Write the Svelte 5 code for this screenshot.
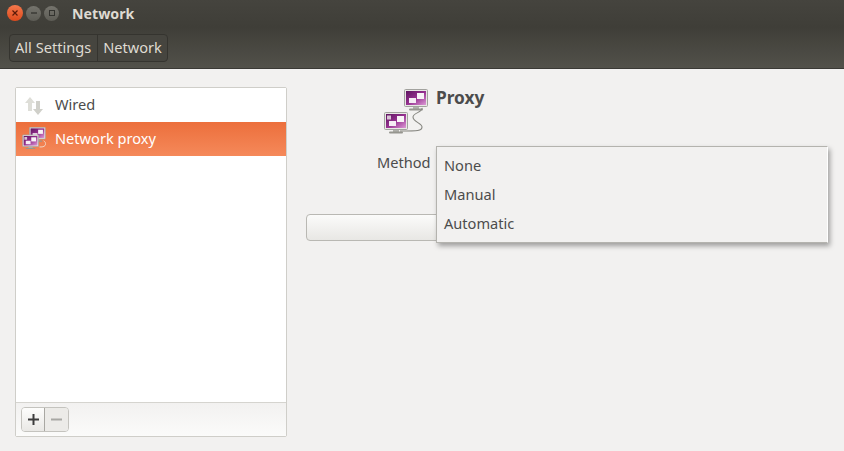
<script>
  const rows = [
    { name: "Wired", icon: "wired" },
    { name: "Network proxy", icon: "proxy", active: true }
  ]
  const options = ["None", "Manual", "Automatic"]
</script>

{#snippet monitor(x, y, id, extra)}
  <g transform="translate({x} {y})">
    <rect x="9" y="17" width="6" height="3" fill="#b0b0ab" />
    <rect x="5" y="19.5" width="14" height="2" rx="1" fill="#96968f" />
    <rect x="0.5" y="0.5" width="23" height="17" rx="1" fill="#e8e8e4" stroke="#a2a29e" />
    <rect x="2" y="2" width="20" height="14" fill="url(#{id})" />
    <rect x="13" y="4" width="7" height="6" fill="#f8f3f7" />
    <rect x="5" y="9" width="7" height="5" fill="#f5ecf4" />
    {#if extra}
      <rect x="3" y="3.5" width="4" height="4" fill="#d8c4d5" />
    {/if}
  </g>
{/snippet}

{#snippet gradient(id)}
  <defs>
    <linearGradient id={id} x1="0" y1="0" x2="1" y2="1">
      <stop offset="0" stop-color="#5e1560" />
      <stop offset="0.5" stop-color="#95308f" />
      <stop offset="1" stop-color="#dd9ad6" />
    </linearGradient>
  </defs>
{/snippet}

<div class="window">
  <header class="titlebar">
    <div class="controls">
      <span class="ctl close">
        <svg viewBox="0 0 8 8" width="8" height="8"><path d="M1.5 1.5 6.5 6.5M6.5 1.5 1.5 6.5" stroke="#5b1a08" stroke-width="1.2" /></svg>
      </span>
      <span class="ctl">
        <svg viewBox="0 0 8 8" width="8" height="8"><path d="M1 4H7" stroke="#33332f" stroke-width="1.3" /></svg>
      </span>
      <span class="ctl">
        <svg viewBox="0 0 8 8" width="8" height="8"><rect x="1.5" y="1.5" width="5" height="5" fill="none" stroke="#33332f" /></svg>
      </span>
    </div>
    <span class="title">Network</span>
  </header>

  <div class="toolbar">
    <div class="crumbs">
      <button>All Settings</button>
      <button>Network</button>
    </div>
  </div>

  <main class="content">
    <aside class="sidebar">
      <ul class="list">
        {#each rows as row}
          <li class:active={row.active}>
            <span class="row-icon">
              {#if row.icon === "wired"}
                <svg class="wired-svg" viewBox="2 1 18 18" width="18" height="18">
                  <path d="M7 1 12 7H9V15H5V7H2Z" fill="#deded8" />
                  <path d="M15 19 20 13H17V5H13V13H10Z" fill="#d0d0ca" />
                </svg>
              {:else}
                <svg class="row-proxy" viewBox="0 0 34 32" width="24" height="22">
                  {@render gradient("row-grad")}
                  {@render monitor(10, 0, "row-grad", false)}
                  {@render monitor(0, 11, "row-grad", true)}
                  <path d="M31 20 C36 23 35 30 25 29" fill="none" stroke="#f0d8c8" stroke-width="1.4" />
                </svg>
              {/if}
            </span>
            <span class="row-name">{row.name}</span>
          </li>
        {/each}
      </ul>
      <div class="list-tools">
        <div class="tool-group">
          <button class="tool add">
            <svg viewBox="0 0 11 11" width="11" height="11"><path d="M5.5 0V11M0 5.5H11" stroke="#3c3c3c" stroke-width="2" /></svg>
          </button>
          <button class="tool remove">
            <svg viewBox="0 0 11 3" width="11" height="3"><path d="M0 1.5H11" stroke="#a8a8a4" stroke-width="2" /></svg>
          </button>
        </div>
      </div>
    </aside>

    <section class="panel">
      <div class="panel-head">
        <svg class="proxy-svg" viewBox="0 0 44 45" width="44" height="45">
          {@render gradient("head-grad")}
          {@render monitor(20, 0, "head-grad", false)}
          {@render monitor(0, 23, "head-grad", true)}
          <path d="M38 19 C39 23 29 24 29 28 C29 33 38 34 38 38 C38 42 34 42 16 42" fill="none" stroke="#85857f" stroke-width="1.1" />
        </svg>
        <h1>Proxy</h1>
      </div>
      <div class="method">
        <span class="method-label">Method</span>
        <div class="menu">
          {#each options as option}
            <div class="menu-item">{option}</div>
          {/each}
        </div>
      </div>
      <div class="apply"></div>
    </section>
  </main>
</div>

<style>
  :global(body) {
    margin: 0;
    background: #f2f1f0;
  }
  .window {
    width: 844px;
    height: 451px;
    overflow: hidden;
    display: flex;
    flex-direction: column;
    background: #f2f1f0;
    font-family: "Noto Sans", "Open Sans", sans-serif;
    font-size: 14.6px;
    color: #4c4c4c;
  }
  .titlebar {
    height: 27px;
    flex: none;
    display: flex;
    align-items: center;
    padding: 0 0 1px 7px;
    background: linear-gradient(#45443e, #3f3e38);
    box-sizing: border-box;
  }
  .controls {
    display: flex;
    align-items: center;
    gap: 3px;
    width: 65px;
  }
  .ctl {
    width: 15px;
    height: 15px;
    border-radius: 50%;
    background: linear-gradient(#75746d, #5d5c55);
    display: flex;
    align-items: center;
    justify-content: center;
  }
  .close {
    width: 16px;
    height: 16px;
    background: linear-gradient(#f4784c, #dd4a1c);
  }
  .title {
    font-weight: 700;
    font-size: 14.2px;
    color: #dfdbd2;
  }
  .toolbar {
    height: 42px;
    flex: none;
    display: flex;
    align-items: center;
    padding: 0 0 0 9px;
    box-sizing: border-box;
    background: linear-gradient(#3f3e38, #52514a);
    border-bottom: 1px solid #3a3935;
  }
  .crumbs {
    display: flex;
    height: 26px;
    border: 1px solid #35342f;
    border-radius: 4px;
    background: #46453f;
  }
  .crumbs button {
    border: 0;
    background: none;
    padding: 0 5px 2px 5px;
    font: inherit;
    color: #dfdbd2;
  }
  .crumbs button:first-child {
    padding-right: 6px;
  }
  .crumbs button + button {
    border-left: 1px solid #35342f;
  }
  .content {
    flex: 1;
    display: flex;
    padding: 18px 15px 14px;
    gap: 19px;
  }
  .sidebar {
    width: 272px;
    flex: none;
    display: flex;
    flex-direction: column;
    box-sizing: border-box;
    border: 1px solid #cfcec9;
    border-radius: 2px;
  }
  .list {
    flex: 1;
    list-style: none;
    margin: 0;
    padding: 0;
    background: #fff;
    border-bottom: 1px solid #d5d4cf;
  }
  .list li {
    height: 34px;
    display: flex;
    align-items: center;
    color: #4c4c4c;
  }
  .list li.active {
    background: linear-gradient(#ec6f3c, #f5895a);
    color: #fff;
  }
  .row-icon {
    width: 39px;
    padding-left: 6px;
    box-sizing: border-box;
    display: flex;
    align-items: center;
  }
  .row-name {
    margin-top: -2px;
  }
  .wired-svg {
    margin: 2px 0 0 3px;
  }
  .row-proxy {
    margin-top: -2px;
  }
  .list-tools {
    height: 33px;
    display: flex;
    align-items: center;
    padding-left: 5px;
    background: linear-gradient(#f2f1f0, #fbfbfa);
  }
  .tool-group {
    display: flex;
    height: 23px;
    border: 1px solid #c4c3be;
    border-radius: 4px;
    overflow: hidden;
  }
  .tool {
    width: 23px;
    padding: 0;
    border: 0;
    display: flex;
    align-items: center;
    justify-content: center;
  }
  .add {
    background: linear-gradient(#fdfdfc, #e9e8e5);
    border-right: 1px solid #a9a8a3;
  }
  .remove {
    background: #ecebe8;
  }
  .panel {
    flex: 1;
    display: flex;
    flex-direction: column;
  }
  .panel-head {
    display: flex;
    align-items: flex-start;
    padding: 1px 0 0 78px;
    gap: 8px;
  }
  .proxy-svg {
    margin-top: 1px;
  }
  h1 {
    margin: 0;
    font-size: 17.3px;
    font-weight: 700;
    color: #4c4c4c;
    line-height: 20px;
  }
  .method {
    position: relative;
    display: flex;
    align-items: center;
    height: 22px;
    margin-top: 17px;
    padding-left: 71px;
  }
  .menu {
    position: absolute;
    left: 130px;
    top: -5px;
    width: 392px;
    height: 97px;
    box-sizing: border-box;
    padding: 4px 0;
    background: #f2f1f0;
    border: 1px solid #b4b3ae;
    border-right-color: #fff;
    box-shadow: 2px 3px 5px rgba(0, 0, 0, 0.35);
    z-index: 2;
  }
  .menu-item {
    height: 29px;
    line-height: 29px;
    padding-left: 7px;
  }
  .apply {
    width: 300px;
    height: 27px;
    margin-top: 41px;
    box-sizing: border-box;
    border: 1px solid #b9b8b3;
    border-radius: 4px;
    background: linear-gradient(#fbfbfa, #e8e7e4);
  }
</style>
